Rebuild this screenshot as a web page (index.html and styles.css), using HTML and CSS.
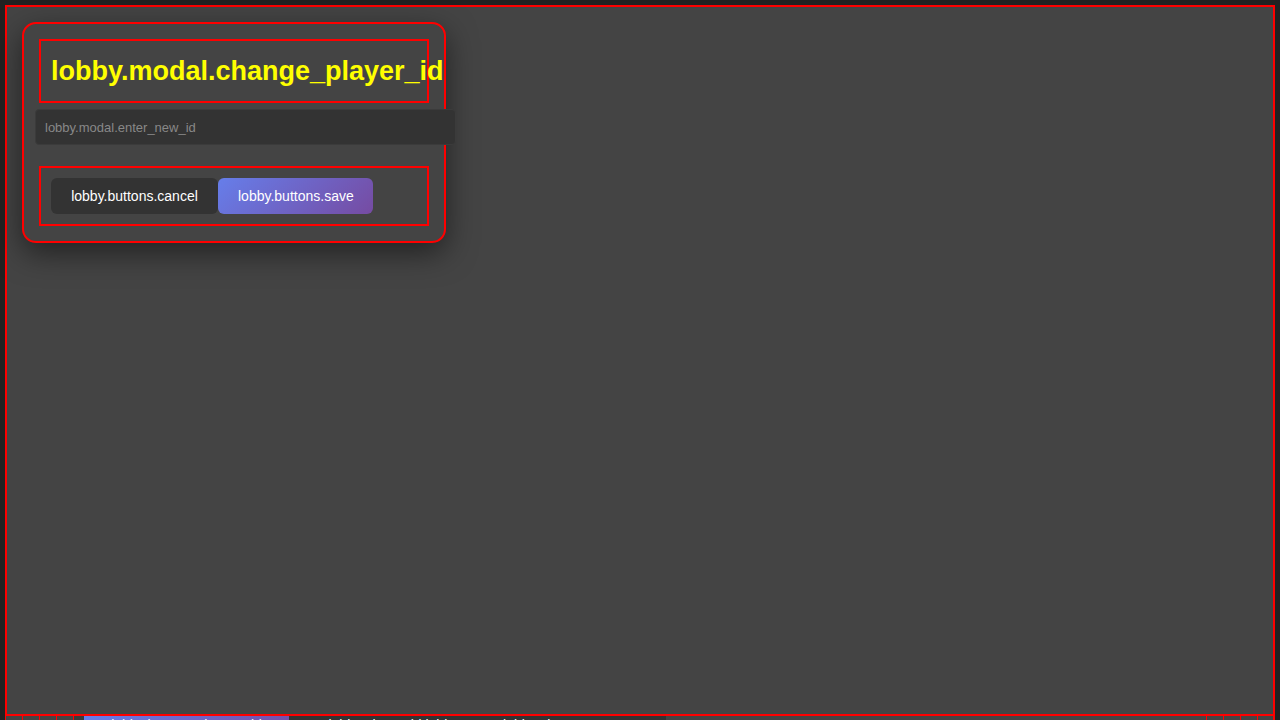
FILE: index.html
```html
<!DOCTYPE html>
<html>
<head>
<meta charset="utf-8">
<link rel="stylesheet" href="styles.css">
</head>
<body>
<div class="lobby">
  <div class="lobby-stage"></div>
  <div class="lobby-bar">
    <span class="cell"></span><span class="cell"></span><span class="cell"></span><span class="cell"></span><span class="cell cell-wide"></span>
    <span class="bar-btn bar-btn-primary">lobby.buttons.change_id</span>
    <span class="bar-btn bar-btn-dark">lobby.player_id lobby.status lobby.players_count</span>
    <span class="bar-spacer"></span>
    <span class="cell"></span><span class="cell"></span><span class="cell"></span><span class="cell cell-last"></span>
  </div>
</div>

<div class="overlay">
  <div class="modal">
    <div class="modal-head">
      <h2 class="modal-title">lobby.modal.change_player_id</h2>
    </div>
    <input class="modal-input" type="text" placeholder="lobby.modal.enter_new_id">
    <div class="modal-actions">
      <button class="btn btn-cancel">lobby.buttons.cancel</button>
      <button class="btn btn-save">lobby.buttons.save</button>
    </div>
  </div>
</div>
</body>
</html>
```
FILE: styles.css
```css
* { box-sizing: border-box; }
html, body { margin: 0; padding: 0; }
body {
  background: #222;
  font-family: "Liberation Sans", Arial, sans-serif;
  color: #fff;
  width: 1280px;
  height: 720px;
  overflow: hidden;
}
.lobby { padding: 0 5px; }
.lobby-stage { height: 716px; }
.lobby-bar {
  display: flex;
  height: 30px;
  background: #444;
  border-right: 2px solid #ff0000;
}
.cell {
  width: 17px;
  border-left: 1px solid #ff0000;
}
.cell-wide { width: 11px; background: #3a3a3a; }
.cell-last { width: 16px; }
.bar-btn {
  font-size: 14px;
  line-height: 14px;
  padding-top: 2px;
  white-space: nowrap;
  overflow: hidden;
  text-align: center;
}
.bar-btn-primary {
  width: 205px;
  background: linear-gradient(135deg, #667eea 0%, #764ba2 100%);
}
.bar-btn-dark {
  width: 377px;
  background: #333;
}
.bar-spacer { flex: 1; }

.overlay {
  position: fixed;
  top: 5px;
  left: 5px;
  width: 1270px;
  height: 711px;
  background: #444;
  border: 2px solid #ff0000;
  padding: 15px;
}
.modal {
  width: 424px;
  background: #444;
  border: 2px solid #ff0000;
  border-radius: 14px;
  padding: 15px;
  box-shadow: 0 10px 30px rgba(0, 0, 0, 0.5);
}
.modal-head {
  border: 2px solid #ff0000;
  padding: 16px 10px;
}
.modal-title {
  margin: 0;
  font-size: 27px;
  line-height: 28px;
  font-weight: bold;
  color: #ffff00;
  white-space: nowrap;
}
.modal-input {
  display: block;
  width: 421px;
  height: 36px;
  margin: 6px 0 21px -4px;
  padding: 0 9px;
  background: #333;
  border: 1px solid #3b3b3b;
  border-radius: 4px;
  font-family: "Liberation Sans", Arial, sans-serif;
  font-size: 13px;
  color: #fff;
  outline: none;
}
.modal-input::placeholder { color: #888; }
.modal-actions {
  display: flex;
  border: 2px solid #ff0000;
  padding: 10px;
}
.btn {
  height: 36px;
  border: none;
  border-radius: 6px;
  font-family: "Liberation Sans", Arial, sans-serif;
  font-size: 14px;
  color: #fff;
  padding: 0 20px;
  cursor: pointer;
}
.btn-cancel { background: #333; width: 167px; }
.btn-save {
  width: 155px;
  background: linear-gradient(135deg, #667eea 0%, #764ba2 100%);
}
```
